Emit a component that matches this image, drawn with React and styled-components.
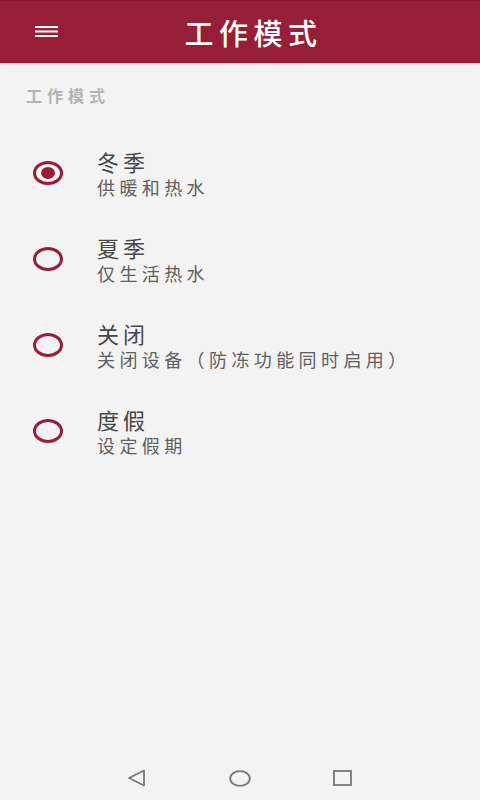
import React, { useState } from "react";
import styled, { createGlobalStyle } from "styled-components";

const GlobalStyle = createGlobalStyle`
  html, body {
    margin: 0;
    padding: 0;
    background: #f3f3f3;
  }
  body {
    font-family: "Noto Sans CJK SC", "Noto Sans", sans-serif;
  }
`;

const modes = [
  { id: "winter", title: "冬季", desc: "供暖和热水" },
  { id: "summer", title: "夏季", desc: "仅生活热水" },
  { id: "off", title: "关闭", desc: "关闭设备（防冻功能同时启用）" },
  { id: "holiday", title: "度假", desc: "设定假期" },
];

function MenuIcon() {
  return (
    <svg width="24" height="14" viewBox="0 0 24 14">
      <rect x="0" y="1" width="23" height="2" fill="#fff" />
      <rect x="0" y="5.5" width="23" height="2" fill="#fff" />
      <rect x="0" y="10" width="23" height="2" fill="#fff" />
    </svg>
  );
}

function App() {
  const [mode, setMode] = useState("winter");

  return (
    <Screen>
      <GlobalStyle />
      <Toolbar>
        <MenuButton>
          <MenuIcon />
        </MenuButton>
        <Title>工作模式</Title>
      </Toolbar>

      <SectionLabel>工作模式</SectionLabel>

      <ModeList>
        {modes.map((m) => (
          <ModeRow key={m.id} onClick={() => setMode(m.id)}>
            <Radio checked={mode === m.id} />
            <ModeText>
              <ModeTitle>{m.title}</ModeTitle>
              <ModeDesc>{m.desc}</ModeDesc>
            </ModeText>
          </ModeRow>
        ))}
      </ModeList>

      <NavBar>
        <svg width="20" height="18" viewBox="0 0 20 18">
          <path
            d="M2 9 L17 1.5 L17 16.5 Z"
            fill="none"
            stroke="#777"
            strokeWidth="1.8"
            strokeLinejoin="round"
          />
        </svg>
        <svg width="22" height="17" viewBox="0 0 22 17">
          <ellipse
            cx="11"
            cy="8.5"
            rx="9.8"
            ry="7.4"
            fill="none"
            stroke="#777"
            strokeWidth="1.8"
          />
        </svg>
        <svg width="20" height="16" viewBox="0 0 20 16">
          <rect
            x="1"
            y="1"
            width="17"
            height="14"
            fill="none"
            stroke="#777"
            strokeWidth="1.8"
          />
        </svg>
      </NavBar>
    </Screen>
  );
}

const Screen = styled.div`
  display: flex;
  flex-direction: column;
  height: 800px;
  width: 480px;
  background: #f3f3f3;
`;

const Toolbar = styled.div`
  display: flex;
  align-items: center;
  height: 63px;
  background-color: #961f37;
  border-top: 1px solid #85182e;
  box-sizing: border-box;
  box-shadow: 0 1px 2px rgba(0, 0, 0, 0.15);
`;

const MenuButton = styled.div`
  display: flex;
  align-items: center;
  justify-content: center;
  width: 24px;
  margin-left: 35px;
`;

const Title = styled.div`
  flex: 1;
  text-align: center;
  margin-right: 32px;
  color: #fff;
  font-size: 29px;
  font-weight: 500;
  letter-spacing: 5.5px;
  line-height: 34px;
`;

const SectionLabel = styled.div`
  margin: 21px 0 0 26px;
  height: 46px;
  color: #b3b3b3;
  font-size: 16px;
  font-weight: 700;
  letter-spacing: 5px;
  line-height: 22px;
`;

const ModeList = styled.div`
  display: flex;
  flex-direction: column;
`;

const ModeRow = styled.div`
  display: flex;
  align-items: center;
  height: 86px;
  cursor: pointer;
`;

const Radio = styled.div`
  position: relative;
  width: 30px;
  height: 24px;
  margin-left: 33px;
  margin-right: 34px;
  border: 3px solid #961f37;
  border-radius: 50%;
  box-sizing: border-box;

  &::after {
    content: "";
    display: ${(props) => (props.checked ? "block" : "none")};
    position: absolute;
    left: 50%;
    top: 50%;
    width: 14px;
    height: 12px;
    border-radius: 50%;
    background: #961f37;
    transform: translate(-50%, -50%);
  }
`;

const ModeText = styled.div`
  display: flex;
  flex-direction: column;
  margin-bottom: 1px;
`;

const ModeTitle = styled.div`
  color: #474747;
  font-size: 22px;
  letter-spacing: 4px;
  line-height: 28px;
`;

const ModeDesc = styled.div`
  color: #606060;
  font-size: 18px;
  letter-spacing: 4.4px;
  line-height: 24px;
`;

const NavBar = styled.div`
  margin-top: auto;
  display: flex;
  align-items: center;
  justify-content: center;
  gap: 82px;
  height: 44px;
`;

export default App;
